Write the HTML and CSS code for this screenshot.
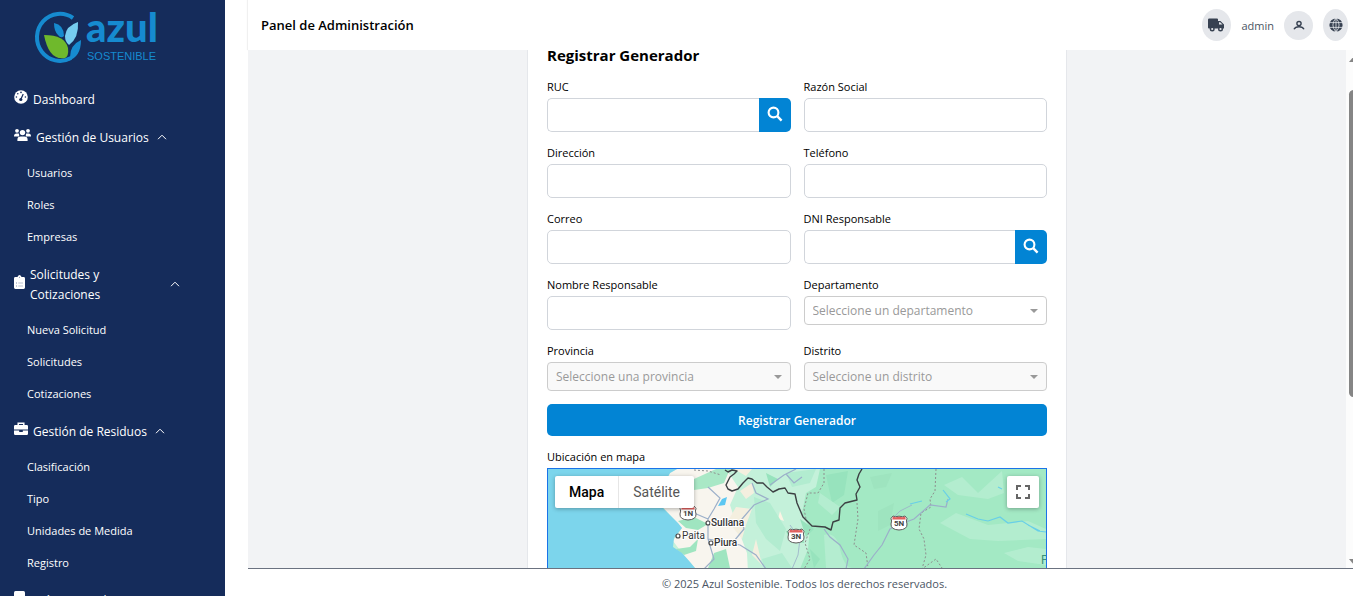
FILE: index.html
```html
<!DOCTYPE html>
<html lang="es">
<head>
<meta charset="utf-8">
<meta name="viewport" content="width=device-width, initial-scale=1">
<title>Panel de Administración</title>
<link rel="stylesheet" href="styles.css">
</head>
<body>
<svg class="defs" aria-hidden="true">
  <symbol id="up" viewBox="0 0 10 6"><path d="M1 5.2 5 1.2 9 5.2" fill="none" stroke="currentColor" stroke-width="1"/></symbol>
  <symbol id="search" viewBox="0 0 16 16"><circle cx="6.5" cy="6.5" r="4.9" fill="none" stroke="currentColor" stroke-width="2.1"/><path d="m10.2 10.2 4.4 4.4" stroke="currentColor" stroke-width="2.4"/></symbol>
  <symbol id="shield" viewBox="0 0 18 16"><path d="M3 1 Q5 2.3 9 1.2 Q13 2.3 15 1 L17 3.4 Q15.8 6 17 9 Q17.5 14.5 9 15 Q.5 14.5 1 9 Q2.2 6 1 3.4Z" fill="#fff" stroke="#5d5b5b"/><path d="M3 1.6 Q5 2.8 9 1.8 Q13 2.8 15 1.6 L15.8 4.6H2.2Z" fill="#e0605e"/></symbol>
</svg>
<div class="app">
  <aside class="sidebar">
    <svg class="logo" viewBox="0 0 122 54" role="img" aria-label="Azul Sostenible">
      <path d="M36 7 A23 23.500 0 1 0 34 47" fill="none" stroke="#168bd0" stroke-width="4"/>
      <path d="M17 12 Q27 14 27 25 Q24 28 21 24 Q17 20 17 12Z" fill="#168bd0"/>
      <path d="M41 11 Q29 15 28 25 Q28 31 32 34 Q42 27 41 11Z" fill="#76cdf0"/>
      <path d="M7 24 Q28 24 31 37 Q32 45 28 47 Q12 50 7 24Z" fill="#6fb92c"/>
      <path d="M44 29 Q33 34 33 46 L31 50 Q44 46 44 29Z" fill="#168bd0"/>
      <text class="logo-name" x="49" y="31">azul</text>
      <text class="logo-sub" x="50" y="49">SOSTENIBLE</text>
    </svg>
    <nav class="nav">
      <a class="item" href="#"><svg width="14" height="14" viewBox="0 0 14 14"><circle cx="7" cy="7" r="6.8" fill="#fff"/><circle cx="6.8" cy="9.5" r="1.6" fill="#152c5b"/><path d="m7 9 2.2-5" stroke="#152c5b" stroke-width="1.2"/><g fill="#152c5b"><circle cx="7" cy="2.4" r=".8"/><circle cx="3.8" cy="3.8" r=".8"/><circle cx="2.4" cy="7" r=".8"/><circle cx="11.4" cy="7" r=".8"/></g></svg><span>Dashboard</span></a>
      <section>
        <button class="item"><svg width="17" height="14" viewBox="0 0 17 14" fill="#fff"><circle cx="3" cy="2.8" r="1.9"/><circle cx="14" cy="2.8" r="1.9"/><circle cx="8.5" cy="4.6" r="2.7"/><path d="M0 8.4Q0 5.6 2.6 5.6H4.8Q5.6 7.6 5 8.4ZM17 8.4Q17 5.6 14.4 5.6H12.2Q11.4 7.6 12 8.4ZM3.4 13V11.4Q3.4 8.4 6.6 8.4H10.4Q13.6 8.4 13.6 11.4V13Z"/></svg><span>Gestión de Usuarios</span><svg class="caret"><use href="#up"/></svg></button>
        <a class="sub" href="#">Usuarios</a><a class="sub" href="#">Roles</a><a class="sub" href="#">Empresas</a>
      </section>
      <section>
        <button class="item"><svg width="11" height="14" viewBox="0 0 11 14"><path d="M1.4 2H3.4Q5.5-1.8 7.6 2H9.6Q11 2 11 3.4V12.6Q11 14 9.6 14H1.4Q0 14 0 12.6V3.4Q0 2 1.4 2Z" fill="#fff"/><path d="M4.3 8H9M4.3 11H9" stroke="#a9b2c5" stroke-width=".8"/><path d="M2 8h1M2 11h1M5 2.4h1" stroke="#6b7a9c" stroke-width=".8"/></svg><span>Solicitudes y Cotizaciones</span><svg class="caret"><use href="#up"/></svg></button>
        <a class="sub" href="#">Nueva Solicitud</a><a class="sub" href="#">Solicitudes</a><a class="sub" href="#">Cotizaciones</a>
      </section>
      <section>
        <button class="item"><svg width="14" height="14" viewBox="0 0 14 14"><path d="M4.2 3V1.2H9.8V3" fill="none" stroke="#fff" stroke-width="1.5"/><path d="M1.2 3H12.8Q14 3 14 4.2V7.6H0V4.2Q0 3 1.2 3ZM0 8.6H5.2V10H8.8V8.6H14V11.8Q14 13 12.8 13H1.2Q0 13 0 11.8Z" fill="#fff"/></svg><span>Gestión de Residuos</span><svg class="caret"><use href="#up"/></svg></button>
        <a class="sub" href="#">Clasificación</a><a class="sub" href="#">Tipo</a><a class="sub" href="#">Unidades de Medida</a><a class="sub" href="#">Registro</a>
      </section>
      <button class="item"><svg width="11" height="14" viewBox="0 0 11 14"><rect width="11" height="14" rx="1.5" fill="#fff"/></svg><span>Guías Manuales</span></button>
    </nav>
  </aside>

  <div class="page">
    <header class="topbar">
      <h1>Panel de Administración</h1>
      <div class="tools">
        <button class="round tall" aria-label="Transporte"><svg width="17" height="14" viewBox="0 0 17 14"><path d="M1.3.5H9Q10 .5 10 1.5V3H12.5L16 6.5V10.5H1V10.5Q0 10.5 0 9.5V1.8Q0 .5 1.3.5Z" fill="#374151"/><path d="M11 4.3H12.2L14.5 6.6H11Z" fill="#e5e7eb"/><circle cx="4.2" cy="11" r="1.8" fill="#e5e7eb" stroke="#374151" stroke-width="1.4"/><circle cx="12.5" cy="11" r="1.8" fill="#e5e7eb" stroke="#374151" stroke-width="1.4"/></svg></button>
        <span class="user">admin</span>
        <button class="round" aria-label="Perfil"><svg width="12" height="12" viewBox="0 0 12 12" fill="none" stroke="#374151" stroke-width="1.4"><circle cx="6" cy="4.6" r="2.1"/><path d="M1 10.3Q2.2 7.8 6 7.8T11 10.3"/></svg></button>
        <button class="round tall globe" aria-label="Idioma"><svg width="14" height="14" viewBox="0 0 14 14"><circle cx="7" cy="7" r="6.6" fill="#374151"/><path d="M0 4.6H14M0 9.4H14M7 0Q.8 7 7 14Q13.2 7 7 0M7 0V14" fill="none" stroke="#e5e7eb" stroke-width=".8"/></svg></button>
      </div>
    </header>

    <div class="body">
      <main class="content">
        <div class="card">
          <h2>Registrar Generador</h2>
          <form class="form">
            <div class="field"><label for="ruc">RUC</label><div class="group"><input id="ruc" type="text"><button type="button" aria-label="Buscar RUC"><svg width="16" height="16"><use href="#search"/></svg></button></div></div>
            <div class="field"><label for="razon">Razón Social</label><input id="razon" type="text"></div>
            <div class="field"><label for="dir">Dirección</label><input id="dir" type="text"></div>
            <div class="field"><label for="tel">Teléfono</label><input id="tel" type="tel"></div>
            <div class="field"><label for="correo">Correo</label><input id="correo" type="email"></div>
            <div class="field"><label for="dni">DNI Responsable</label><div class="group"><input id="dni" type="text"><button type="button" aria-label="Buscar DNI"><svg width="16" height="16"><use href="#search"/></svg></button></div></div>
            <div class="field"><label for="nombre">Nombre Responsable</label><input id="nombre" type="text"></div>
            <div class="field"><label for="dep">Departamento</label><div class="select"><select id="dep"><option>Seleccione un departamento</option></select></div></div>
            <div class="field"><label for="prov">Provincia</label><div class="select"><select id="prov" disabled><option>Seleccione una provincia</option></select></div></div>
            <div class="field"><label for="dist">Distrito</label><div class="select"><select id="dist" disabled><option>Seleccione un distrito</option></select></div></div>
            <button class="submit" type="submit">Registrar Generador</button>
          </form>
          <p class="map-label">Ubicación en mapa</p>
          <div class="map">
            <svg class="terrain" viewBox="0 0 498 180" preserveAspectRatio="xMinYMin slice">
              <rect width="498" height="180" fill="#a3e9c4"/>
              <path d="M100 0H272L268 18 258 24 254 44 262 60 260 80 252 100V180H100Z" fill="#c4f1da"/>
              <path d="M129 0 122 4 108 30 120 44 134 59 125 72 134 84 147 99 160 180H204L199 84 190 60 182 36 190 18 178 0Z" fill="#f8f5ee"/>
              <path d="M146 10 168 0H182L176 14 160 19 146 21Z" fill="#a9e8c6"/>
              <path d="M130 52 146 48 160 55 150 61 138 59ZM128 80 142 78 150 70 148 82 136 86ZM160 99 166 84 178 80 182 99Z" fill="#9fe5c0"/>
              <path d="M180 52 188 38 204 40 198 56 194 70ZM186 0 204 0 198 7ZM208 70 214 96 204 86ZM192 22 204 14 206 24 198 30Z" fill="#f4efdf"/>
              <path d="M217 46 221 50 219 58 216 54ZM232 42 236 52 230 50Z" fill="#fbf4e4"/>
              <path d="M206 28 222 34 238 60 232 82 218 70 208 54ZM238 4 268 0 262 14 244 18ZM214 90 234 84 244 99H216Z" fill="#b2ecd0"/>
              <path d="M238 62 254 60 256 74 242 72ZM252 50 266 60 258 68ZM262 80 272 90 266 99ZM278 6 300 2 296 26 284 34ZM218 4 230 10 222 18Z" fill="#97e3bd"/>
              <path d="M276 66Q288 62 292 80T304 99H278ZM272 24 292 38 284 46 270 34Z" fill="#b4edd0"/>
              <path d="M322 8 344 4 338 18 326 20ZM330 42 346 34 342 56 330 62Z" fill="#9ee4bf"/>
              <path d="M396 16 414 8 430 24 454 2 456 24 440 30 410 26ZM392 54 408 44 440 56 480 52 498 60V70L450 72 422 70ZM456 84 480 78 498 80V96L470 92Z" fill="#b3edcf"/>
              <path d="M0 0H129L122 4 108 30 115 39 120 44 130 54 134 59 126 69 125 78 134 84 142 93 147 99 160 180H0Z" fill="#7cd5ec"/>
              <path d="M174 30 179 28 177 36 170 37Z" fill="#5cc7f2"/>
              <g fill="none" stroke="#8e8f8e" stroke-dasharray="2 2"><path d="M146 1 160 2 173 6M276 0V14L270 24 260 24 256 40 258 50M262 60 257 74 262 90 256 100M309 34 310 50 306 76 318 84 320 99M388 0 387 22 382 30 383 38 373 44 371 60 376 70 378 86 374 100 388 90 394 99"/></g>
              <g fill="none" stroke="#9bafc9" stroke-width="1.2"><path d="M160 18 172 29 166 40 160 50V70L166 90 156 100M160 50 146 44M160 70 192 76 208 86 218 100M204 14 208 24 220 30 206 36 194 50 196 60 186 72M222 16 236 6 248 0M238 5 246 14 254 8M276 60 282 68 292 76 300 90 298 100M316 100 326 86 334 76 342 60 350 56 366 50 382 36 398 38 400 30"/><path d="M242 56 252 70 250 86 244 100M344 50 352 42 364 36" stroke-width=".8"/></g>
              <path d="M395 21 402 30 398 33M362 35 374 32M418 45 430 50 440 52 452 48 460 54 474 52 490 62 498 63M450 18 454 20M480 56 492 62" fill="none" stroke="#68cfe8" stroke-width="1.2"/>
              <path d="M177 1 180 3 184 1 189 2 186 5 182 8 178 16 180 20 184 22 190 20 195 14 200 9 204 10 209 14 215 14 219 18 225 23 231 20 237 19 240 24 247 25 249 34 255 48 264 57 277 58 283 61 285 53 291 51 292 39 297 34 309 31 308 25 312 18 309 11 311 5 314 0" fill="none" stroke="#3c4043" stroke-width="1.4" stroke-linejoin="round"/>
              <use href="#shield" x="131" y="36" width="18" height="16"/><use href="#shield" x="239" y="59" width="18" height="16"/><use href="#shield" x="342" y="46" width="18" height="16"/>
              <g class="road"><text x="140" y="47">1N</text><text x="248" y="70">3N</text><text x="351" y="57">5N</text></g>
              <g fill="#fff" stroke="#444" stroke-width="1.2"><circle cx="160" cy="54" r="2"/><circle cx="130" cy="67" r="2"/><circle cx="163" cy="74" r="2"/></g>
              <g class="town"><text x="163" y="57">Sullana</text><text x="134" y="70" class="minor">Paita</text><text x="166" y="77">Piura</text></g>
              <text class="region" x="493" y="95">P</text>
            </svg>
            <div class="map-types"><button class="on">Mapa</button><button>Satélite</button></div>
            <button class="fullscreen" aria-label="Pantalla completa"><svg width="14" height="14" viewBox="0 0 14 14"><path d="M1 5V1H5M9 1H13V5M13 9V13H9M5 13H1V9" fill="none" stroke="#666" stroke-width="2"/></svg></button>
          </div>
        </div>
      </main>
      <div class="scroll" aria-hidden="true"><i class="arrow"></i><i class="thumb"></i><i class="arrow down"></i></div>
    </div>
    <footer class="footer">© 2025 Azul Sostenible. Todos los derechos reservados.</footer>
  </div>
</div>
</body>
</html>
```
FILE: styles.css
```css
* { box-sizing: border-box; }
body { margin: 0; font-family: "Open Sans", "Noto Sans", sans-serif; font-size: 12px; color: #000; background: #fff; }
button, input, select { font: inherit; margin: 0; }
button { border: 0; padding: 0; background: none; color: inherit; cursor: pointer; }
svg { display: block; flex: none; }
h1, h2, p { margin: 0; }
.defs { position: absolute; width: 0; height: 0; }

.app { display: flex; height: 100vh; overflow: hidden; }

.sidebar { flex: none; width: 225px; padding: 11px 0 0 14px; overflow: hidden; background: #152c5b; color: #fff; }
.logo { width: 122px; height: 54px; margin-left: 23px; overflow: visible; }
.logo-name { font: 900 40px Lato, sans-serif; fill: #168bd0; }
.logo-sub { font: 11px "Liberation Sans", sans-serif; fill: #168bd0; }
.nav { display: flex; flex-direction: column; padding-top: 16px; }
.item { display: flex; align-items: center; gap: 5px; padding: 9px 0; color: #fff; font-size: 12px; line-height: 20px; text-align: left; text-decoration: none; }
.item span { max-width: 132px; }
.item > svg:first-child { margin-bottom: 6px; }
.item > .caret { width: 10px; height: 6px; margin: 0 0 2px 3px; }
.sub { display: block; padding: 6px 13px; color: #fff; font-size: 11px; line-height: 20px; text-decoration: none; }
.nav section { padding-bottom: 3px; }

.page { flex: 1; min-width: 0; display: flex; flex-direction: column; margin-left: 23px; }
.topbar { flex: none; display: flex; align-items: center; justify-content: space-between; height: 50px; padding: 0 5px 0 13px; box-shadow: -1px 0 1px #f0f0f0; }
h1 { font-size: 13px; font-weight: 600; }
.tools { display: flex; align-items: center; gap: 10px; }
.round { display: grid; place-items: center; width: 29px; height: 29px; border-radius: 50%; background: #e5e7eb; }
.tall { height: 32px; }
.globe { width: 25px; }
.user { font-size: 11px; color: #4b5563; }

.body { flex: 1; min-height: 0; display: flex; overflow: hidden; }
.content { flex: 1; min-width: 0; overflow: hidden; background: #f2f3f5; }
.card { max-width: 540px; margin: -13px auto 0; padding: 5px 19px 19px; border: 1px solid #e5e7eb; background: #fff; }
h2 { margin-bottom: 12px; font-size: 15px; font-weight: 700; line-height: 24px; }
.form { display: grid; grid-template-columns: 1fr 1fr; gap: 13px; }
.field { display: flex; flex-direction: column; min-width: 0; }
.field label { margin-bottom: 4px; font-size: 11px; font-weight: 500; line-height: 15px; }
.field input { width: 100%; min-width: 0; height: 34px; padding: 0 8px; border: 1px solid #d1d5db; border-radius: 5px; background: #fff; }
.group { display: flex; }
.group input { border-right: 0; border-radius: 5px 0 0 5px; }
.group button { flex: none; display: grid; place-items: center; width: 32px; padding-bottom: 2px; border-radius: 0 5px 5px 0; background: #0284d4; color: #fff; }
.select { position: relative; }
.select::after { content: ""; position: absolute; top: 13px; right: 9px; border: 4px solid transparent; border-top: 4px solid #999; border-bottom: 0; }
.select select { display: block; width: 100%; height: 29px; padding: 0 8px; appearance: none; border: 1px solid #ccc; border-radius: 4px; background: #fff; color: #999; font-size: 12px; opacity: 1; }
.select select:disabled { background: #f9f9f9; }
.submit { grid-column: 1 / -1; height: 32px; border-radius: 5px; background: #0284d4; color: #fff; font-weight: 600; }
.map-label { margin: 12px 0 2px; font-size: 11px; font-weight: 500; line-height: 18px; }

.map { position: relative; height: 182px; border: 1px solid #1a73e8; overflow: hidden; }
.terrain { width: 100%; height: 100%; }
.map-types { position: absolute; top: 7px; left: 7px; display: flex; border-radius: 2px; background: #fff; box-shadow: 0 1px 4px rgba(0, 0, 0, .3); font: 14px/32px Roboto, sans-serif; color: #565656; }
.map-types button { padding: 0 14px; }
.map-types .on { font-weight: 500; color: #000; border-right: 1px solid #e6e6e6; }
.fullscreen { position: absolute; top: 7px; right: 7px; display: grid; place-items: center; width: 32px; height: 32px; border-radius: 2px; background: #fff; box-shadow: 0 1px 4px rgba(0, 0, 0, .3); }
.road { font: 700 8px Roboto, sans-serif; fill: #444; text-anchor: middle; }
.town { font: 500 10px Roboto, sans-serif; fill: #333; stroke: #fff; stroke-width: 2px; paint-order: stroke; }
.minor { font-weight: 400; }
.region { font: 12px Roboto, sans-serif; fill: #38917a; }

.scroll { flex: none; width: 7px; padding: 5px 0 2px 3px; display: flex; flex-direction: column; overflow: hidden; background: #fcfcfc; }
.arrow { flex: none; width: 12px; height: 7px; background: #858585; clip-path: polygon(50% 0, 100% 100%, 0 100%); }
.down { margin-top: auto; clip-path: polygon(0 0, 100% 0, 50% 100%); }
.thumb { flex: none; width: 9px; height: 60%; margin-top: 28px; border-radius: 5px; background: #858585; }

.footer { flex: none; height: 28px; border-top: 1px solid #6b7280; color: #4b5563; font-size: 11px; line-height: 29px; text-align: center; padding-left: 8px; }
```
